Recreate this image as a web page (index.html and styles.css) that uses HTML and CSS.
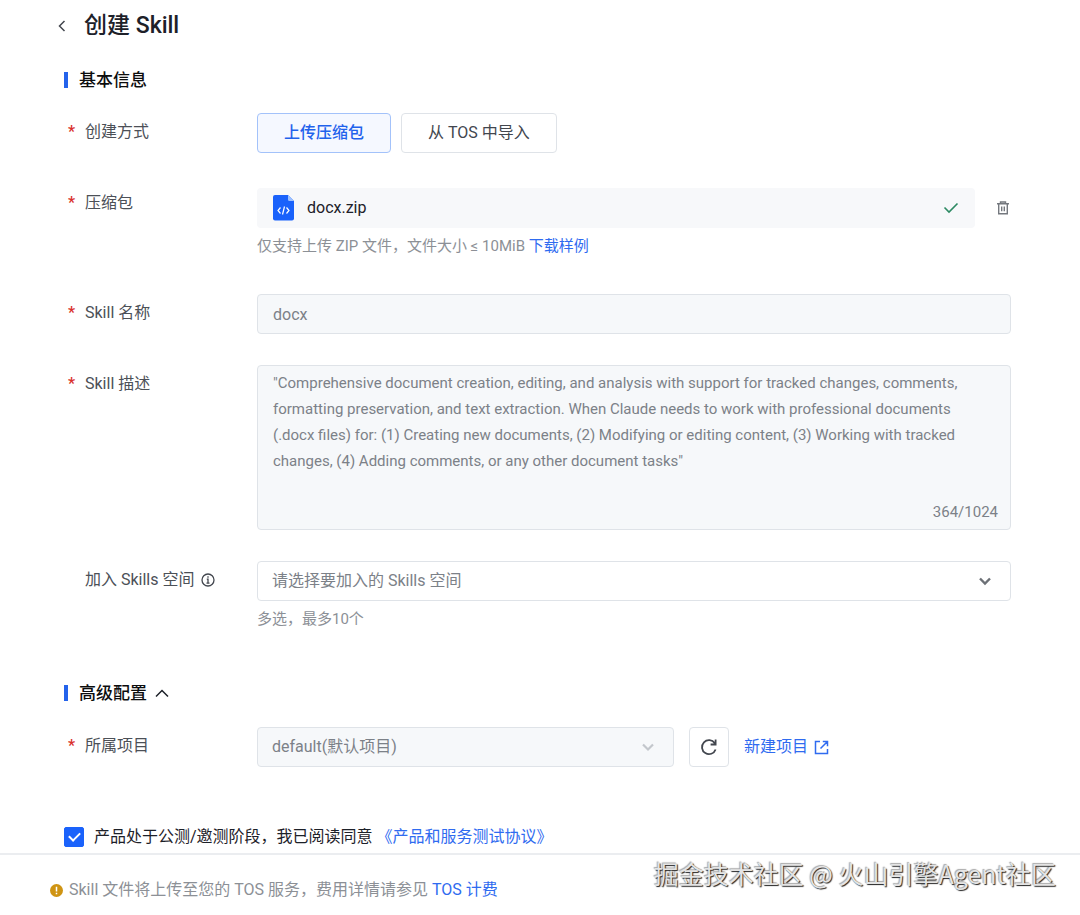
FILE: index.html
```html
<!DOCTYPE html>
<html lang="zh-CN">
<head>
<meta charset="utf-8">
<title>创建 Skill</title>
<link rel="stylesheet" href="styles.css">
</head>
<body>
<form class="page">
  <main class="content">
    <header class="header">
      <button class="icon-button" type="button" aria-label="返回">
        <svg width="10" height="14" viewBox="0 0 10 14" fill="none" stroke="#42464e" stroke-width="1.5"><path d="M7.500 2 2.500 7l5 5"/></svg>
      </button>
      <h1 class="title">创建 Skill</h1>
    </header>

    <h2 class="section">基本信息</h2>

    <div class="row">
      <span class="label required" id="method">创建方式</span>
      <div class="options" role="group" aria-labelledby="method">
        <button class="option option-active" type="button">上传压缩包</button>
        <button class="option" type="button">从 TOS 中导入</button>
      </div>
    </div>

    <div class="row row-upload">
      <span class="label required">压缩包</span>
      <div class="field">
        <div class="upload">
          <div class="file">
            <svg width="21" height="26" viewBox="0 0 21 26" fill="none"><path d="M2 0h13l6 6v17.500a2 2 0 0 1-2 2H2a2 2 0 0 1-2-2V2a2 2 0 0 1 2-2z" fill="#1a62fb"/><path d="M15 0l6 6h-4.500A1.500 1.500 0 0 1 15 4.500z" fill="#9dc1ff"/><path d="M7.500 12.500 5 15.500l2.500 3M13.500 12.500l2.500 3-2.500 3M11.500 11.500l-2 8" stroke="#fff" stroke-width="1.200"/></svg>
            <span class="file-name">docx.zip</span>
            <svg width="16" height="12" viewBox="0 0 16 12" fill="none" stroke="#2d8a63" stroke-width="1.600"><path d="m1.500 5.500 4.500 4.500 8.500-8.500"/></svg>
          </div>
          <button class="icon-button trash" type="button" aria-label="删除">
            <svg width="14" height="14" viewBox="0 0 14 14" fill="none" stroke="#74787e" stroke-width="1.400"><path d="M1 2.700h12M4.500 2.500V1h5v1.500M2.700 3v9.800h8.600V3M5.700 5.500v4.700M8.300 5.500v4.700"/></svg>
          </button>
        </div>
        <p class="hint">仅支持上传 ZIP 文件，文件大小 ≤ 10MiB <a class="link" href="#">下载样例</a></p>
      </div>
    </div>

    <div class="row">
      <label class="label required" for="name">Skill 名称</label>
      <input class="control" id="name" type="text" value="docx" readonly>
    </div>

    <div class="row">
      <label class="label required" for="desc">Skill 描述</label>
      <div class="description">
        <textarea class="description-text" id="desc" rows="5" readonly>"Comprehensive document creation, editing, and analysis with support for tracked changes, comments, formatting preservation, and text extraction. When Claude needs to work with professional documents (.docx files) for: (1) Creating new documents, (2) Modifying or editing content, (3) Working with tracked changes, (4) Adding comments, or any other document tasks"</textarea>
        <span class="counter">364/1024</span>
      </div>
    </div>

    <div class="row">
      <label class="label" for="space">加入 Skills 空间
        <svg class="info" width="14" height="14" viewBox="0 0 14 14" fill="none" stroke="#42464e" stroke-width="1.300"><circle cx="7" cy="7" r="6"/><path d="M7 3.300v1.400M5.800 6.200H7v4M5.500 10.200h3"/></svg>
      </label>
      <div class="field">
        <div class="select">
          <select class="control control-open" id="space"><option>请选择要加入的 Skills 空间</option></select>
          <svg class="chevron" width="12" height="9" viewBox="0 0 12 9" fill="none" stroke="#6c7076" stroke-width="2.400"><path d="m1 1.500 5 5 5-5"/></svg>
        </div>
        <p class="hint">多选，最多10个</p>
      </div>
    </div>

    <h2 class="section section-advanced">高级配置
      <button class="icon-button" type="button" aria-label="收起">
        <svg width="14" height="9" viewBox="0 0 14 9" fill="none" stroke="#1d2129" stroke-width="1.500"><path d="m1 7.500 6-6 6 6"/></svg>
      </button>
    </h2>

    <div class="row">
      <label class="label required" for="project">所属项目</label>
      <div class="project">
        <div class="select">
          <select class="control" id="project" disabled><option>default(默认项目)</option></select>
          <svg class="chevron" width="12" height="9" viewBox="0 0 12 9" fill="none" stroke="#c3c7cc" stroke-width="2.200"><path d="m1 1.500 5 5 5-5"/></svg>
        </div>
        <button class="refresh" type="button" aria-label="刷新">
          <svg width="18" height="18" viewBox="0 0 18 18" fill="none" stroke="#42464e" stroke-width="1.800"><path d="M15.600 11.500A7 7 0 1 1 14.800 5.200M15.600 1.500v5h-5"/></svg>
        </button>
        <a class="link link-icon" href="#">新建项目
          <svg width="15" height="15" viewBox="0 0 15 15" fill="none" stroke="#2f6bf0" stroke-width="1.500"><path d="M6 1.500H1.500v12h12V9M8.800 1.500h4.700v4.700M13.500 1.500 6.500 8.500"/></svg>
        </a>
      </div>
    </div>

    <div class="agreement">
      <input class="checkbox" id="agree" type="checkbox" checked>
      <span><label for="agree">产品处于公测/邀测阶段，我已阅读同意</label> <a class="link" href="#">《产品和服务测试协议》</a></span>
    </div>
  </main>

  <footer class="footer">
    <p class="notice">
      <svg width="13" height="13" viewBox="0 0 13 13"><circle cx="6.500" cy="6.500" r="6.500" fill="#cf9413"/><path d="M6.500 2.800v4.700M6.500 8.700v1.600" stroke="#fff" stroke-width="1.500"/></svg>
      <span>Skill 文件将上传至您的 TOS 服务，费用详情请参见 <a class="link" href="#">TOS 计费</a></span>
    </p>
    <p class="watermark">掘金技术社区 @ 火山引擎Agent社区</p>
  </footer>
</form>
</body>
</html>
```
FILE: styles.css
```css
* {
  box-sizing: border-box;
}

body {
  margin: 0;
  background: #fff;
  color: #4c5057;
  font: 16px/24px Roboto, "Noto Sans CJK SC", sans-serif;
}

h1, h2, p {
  margin: 0;
}

button, input, select, textarea {
  font: inherit;
}

.page {
  display: flex;
  flex-direction: column;
  min-height: 100vh;
}

.content {
  padding: 10px 69px 0 64px;
}

.header {
  display: flex;
  align-items: center;
  gap: 17px;
  margin-left: -7px;
}

.icon-button {
  display: flex;
  padding: 0;
  border: 0;
  background: none;
}

.title {
  color: #1d2129;
  font-size: 23px;
  line-height: 32px;
  font-weight: 500;
}

.section {
  display: flex;
  align-items: center;
  gap: 8px;
  margin: 26px 0 21px;
  color: #0c0d0e;
  font-size: 17px;
  line-height: 24px;
  font-weight: 500;
}

.section::before {
  content: "";
  width: 4px;
  height: 16px;
  margin-right: 3px;
  background: #2463eb;
}

.section-advanced {
  margin: 50px 0 22px;
}

.row {
  display: grid;
  grid-template-columns: 193px minmax(0, 1fr);
  align-items: start;
  margin-bottom: 31px;
}

.row-upload {
  margin-bottom: 36px;
}

.row-upload .field {
  padding-top: 4px;
}

.label {
  display: flex;
  align-items: center;
  gap: 7px;
  padding: 7px 0 0 21px;
}

.required {
  padding-left: 4px;
}

.required::before {
  content: "*";
  width: 10px;
  color: #d9302c;
  font-weight: 500;
}

.options {
  display: flex;
  gap: 10px;
}

.option {
  height: 40px;
  padding: 0 26px;
  border: 1px solid #dfe3e8;
  border-radius: 4px;
  background: #fff;
  color: #42464e;
}

.option-active {
  border-color: #a3c2fa;
  background: #f5f8ff;
  color: #1f62ec;
  font-weight: 500;
}

.upload {
  display: flex;
  align-items: center;
  gap: 21px;
}

.file {
  display: flex;
  flex: 1;
  align-items: center;
  gap: 13px;
  height: 40px;
  padding: 0 16px;
  border-radius: 4px;
  background: #f7f8fa;
  color: #1d2129;
}

.file-name {
  flex: 1;
}

.trash {
  margin-right: 1px;
}

.hint {
  padding-top: 6px;
  color: #8c9096;
  font-size: 15px;
}

.link {
  color: #2f6bf0;
  text-decoration: none;
}

.control {
  display: block;
  width: 100%;
  height: 40px;
  padding: 0 15px;
  border: 1px solid #dfe3e8;
  border-radius: 4px;
  background: #f6f8fa;
  color: #7c8188;
  appearance: none;
  opacity: 1;
}

.control-open {
  background: #fff;
}

.description {
  display: flex;
  flex-direction: column;
  padding: 4px 12px 5px 15px;
  border: 1px solid #dfe3e8;
  border-radius: 4px;
  background: #f6f8fa;
  color: #7c8188;
  font-size: 15px;
}

.description-text {
  display: block;
  width: 100%;
  padding: 0 32px 0 0;
  border: 0;
  outline: 0;
  background: none;
  color: inherit;
  line-height: 26px;
  resize: none;
}

.counter {
  align-self: flex-end;
}

.select {
  position: relative;
}

.select .control {
  padding: 0 14px;
}

.chevron {
  position: absolute;
  top: 16px;
  right: 20px;
}

.project {
  display: grid;
  grid-template-columns: minmax(0, 417px) 40px auto;
  align-items: center;
  justify-content: start;
  gap: 15px;
}

.refresh {
  display: grid;
  place-items: center;
  height: 40px;
  padding: 0;
  border: 1px solid #dfe3e8;
  border-radius: 4px;
  background: #fff;
}

.link-icon {
  display: flex;
  align-items: center;
  gap: 6px;
}

.agreement {
  display: flex;
  align-items: center;
  gap: 10px;
  padding-top: 27px;
  color: #1d2129;
}

.checkbox {
  display: grid;
  place-items: center;
  width: 20px;
  height: 20px;
  margin: 0;
  border: 1px solid #1a62fb;
  border-radius: 2px;
  appearance: none;
}

.checkbox:checked {
  background: #1a62fb;
}

.checkbox:checked::before {
  content: "";
  width: 9px;
  height: 5px;
  margin-bottom: 3px;
  border: solid #fff;
  border-width: 0 0 2px 2px;
  transform: rotate(-45deg);
}

.footer {
  display: flex;
  flex: 1;
  align-items: start;
  justify-content: space-between;
  margin-top: 4px;
  padding: 0 24px 0 50px;
  border-top: 2px solid #ebedf0;
}

.notice {
  display: flex;
  align-items: center;
  gap: 6px;
  padding-top: 23px;
  color: #8c9096;
}

.watermark {
  color: #e4e4e4;
  font: 25px/36px "Noto Sans CJK SC", sans-serif;
  text-shadow: 1px 1px 1px #222, -1px -1px 1px #aaa;
}
```
